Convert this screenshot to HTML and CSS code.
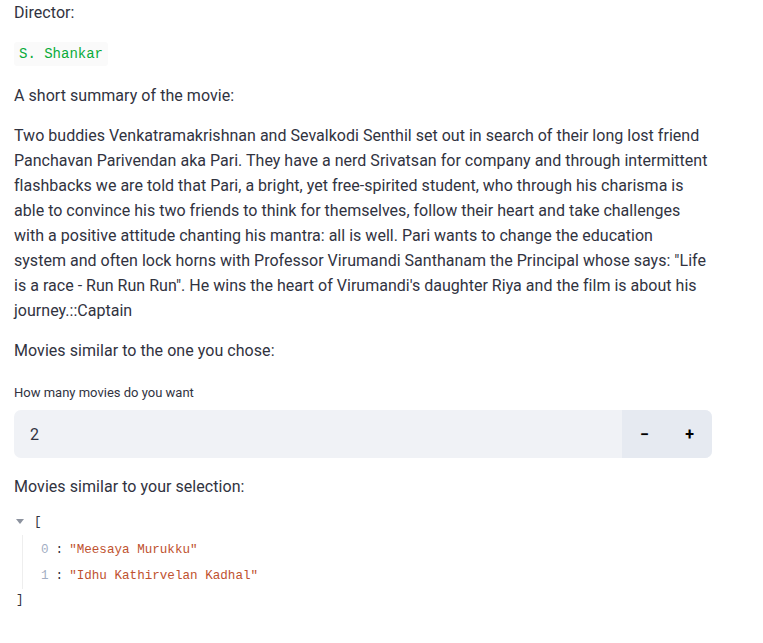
FILE: index.html
```html
<!DOCTYPE html>
<html>
<head>
<meta charset="utf-8">
<link rel="stylesheet" href="styles.css">
</head>
<body>
<main class="page">
  <p class="text">Director:</p>
  <div class="code-wrap"><code class="code">S. Shankar</code></div>
  <p class="text gap-a">A short summary of the movie:</p>
  <p class="text para summary">Two buddies Venkatramakrishnan and Sevalkodi Senthil set out in search of their long lost friend<br>Panchavan Parivendan aka Pari. They have a nerd Srivatsan for company and through intermittent<br>flashbacks we are told that Pari, a bright, yet free-spirited student, who through his charisma is<br>able to convince his two friends to think for themselves, follow their heart and take challenges<br>with a positive attitude chanting his mantra: all is well. Pari wants to change the education<br>system and often lock horns with Professor Virumandi Santhanam the Principal whose says: "Life<br>is a race - Run Run Run". He wins the heart of Virumandi's daughter Riya and the film is about his<br>journey.::Captain</p>
  <p class="text para">Movies similar to the one you chose:</p>
  <label class="label">How many movies do you want</label>
  <div class="number-input">
    <span class="value">2</span>
    <div class="steps">
      <span class="step">&minus;</span>
      <span class="step">+</span>
    </div>
  </div>
  <p class="text gap-b">Movies similar to your selection:</p>
  <div class="json">
    <div class="json-open"><span class="caret"></span><span class="bracket">[</span></div>
    <div class="json-body">
      <div class="json-row"><span class="idx">0</span><span class="colon">:</span><span class="str">"Meesaya Murukku"</span></div>
      <div class="json-row"><span class="idx">1</span><span class="colon">:</span><span class="str">"Idhu Kathirvelan Kadhal"</span></div>
    </div>
    <div class="json-close bracket">]</div>
  </div>
</main>
</body>
</html>
```

FILE: styles.css
```css
html, body {
  margin: 0;
  padding: 0;
  background: #ffffff;
}
.page {
  width: 698px;
  padding: 0 14px;
  display: flex;
  flex-direction: column;
  font-family: Roboto, "Noto Sans", sans-serif;
  color: #31333f;
}
.text {
  margin: 0;
  font-size: 16px;
  line-height: 25px;
  letter-spacing: 0.05px;
}
.summary {
  letter-spacing: 0.02px;
  white-space: nowrap;
}
.code-wrap {
  margin-top: 17px;
  display: flex;
}
.code {
  font-family: "Liberation Mono", monospace;
  font-size: 14px;
  line-height: 24px;
  color: #09ab3b;
  background: #fafafa;
  padding: 0 5px;
  border-radius: 3px;
}
.gap-a { margin-top: 17px; }
.para { margin-top: 15px; }
.label {
  margin-top: 21px;
  font-size: 13px;
  line-height: 18px;
  color: #31333f;
}
.number-input {
  margin-top: 8px;
  height: 48px;
  display: flex;
  align-items: stretch;
  background: #f0f2f6;
  border-radius: 7px;
  overflow: hidden;
}
.value {
  flex: 1;
  display: flex;
  align-items: center;
  padding-left: 16px;
  font-size: 16px;
}
.steps {
  width: 90px;
  display: flex;
  background: #e6eaf1;
}
.step {
  flex: 1;
  display: flex;
  align-items: center;
  justify-content: center;
  font-weight: 700;
  font-size: 16px;
  color: #000;
}
.gap-b { margin-top: 16px; }
.json {
  margin-top: 10px;
  font-family: "Liberation Mono", monospace;
  font-size: 12.6px;
  color: #31333f;
}
.json-open {
  display: flex;
  align-items: center;
  height: 26px;
}
.caret {
  width: 0;
  height: 0;
  margin-left: 2px;
  margin-right: 10px;
  border-left: 4px solid transparent;
  border-right: 4px solid transparent;
  border-top: 5px solid #8d939f;
  margin-top: -2px;
}
.bracket { font-weight: 400; }
.json-body {
  margin-left: 8px;
  padding-top: 2px;
  padding-left: 18px;
  border-left: 1px solid #eeeeee;
  display: flex;
  flex-direction: column;
}
.json-row {
  height: 26px;
  line-height: 26px;
}
.idx { color: #a3aec3; }
.colon { color: #31333f; margin: 0 6px 0 7px; }
.str { color: #c0522f; }
.json-close {
  margin-left: 2px;
  height: 22px;
  line-height: 22px;
}
```
